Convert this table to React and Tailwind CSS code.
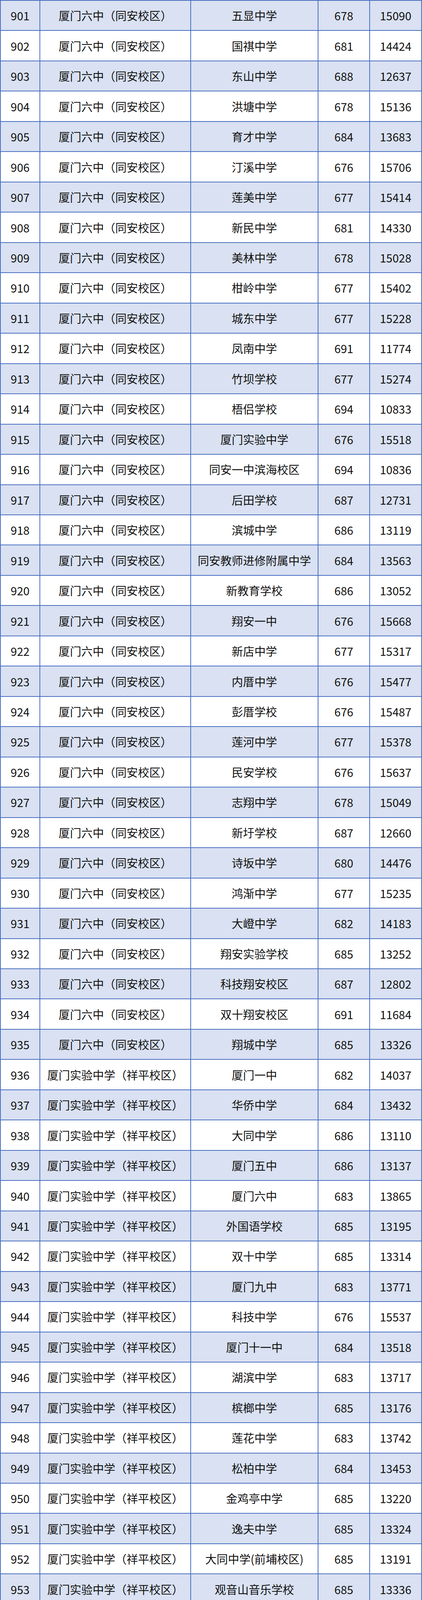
const A = '厦门六中（同安校区）';
const B = '厦门实验中学（祥平校区）';

const rows = [
  ['五显中学', 678, 15090], ['国祺中学', 681, 14424], ['东山中学', 688, 12637], ['洪塘中学', 678, 15136],
  ['育才中学', 684, 13683], ['汀溪中学', 676, 15706], ['莲美中学', 677, 15414], ['新民中学', 681, 14330],
  ['美林中学', 678, 15028], ['柑岭中学', 677, 15402], ['城东中学', 677, 15228], ['凤南中学', 691, 11774],
  ['竹坝学校', 677, 15274], ['梧侣学校', 694, 10833], ['厦门实验中学', 676, 15518], ['同安一中滨海校区', 694, 10836],
  ['后田学校', 687, 12731], ['滨城中学', 686, 13119], ['同安教师进修附属中学', 684, 13563], ['新教育学校', 686, 13052],
  ['翔安一中', 676, 15668], ['新店中学', 677, 15317], ['内厝中学', 676, 15477], ['彭厝学校', 676, 15487],
  ['莲河中学', 677, 15378], ['民安学校', 676, 15637], ['志翔中学', 678, 15049], ['新圩学校', 687, 12660],
  ['诗坂中学', 680, 14476], ['鸿渐中学', 677, 15235], ['大嶝中学', 682, 14183], ['翔安实验学校', 685, 13252],
  ['科技翔安校区', 687, 12802], ['双十翔安校区', 691, 11684], ['翔城中学', 685, 13326],
  ['厦门一中', 682, 14037], ['华侨中学', 684, 13432], ['大同中学', 686, 13110], ['厦门五中', 686, 13137],
  ['厦门六中', 683, 13865], ['外国语学校', 685, 13195], ['双十中学', 685, 13314], ['厦门九中', 683, 13771],
  ['科技中学', 676, 15537], ['厦门十一中', 684, 13518], ['湖滨中学', 683, 13717], ['槟榔中学', 685, 13176],
  ['莲花中学', 683, 13742], ['松柏中学', 684, 13453], ['金鸡亭中学', 685, 13220], ['逸夫中学', 685, 13324],
  ['大同中学(前埔校区)', 685, 13191], ['观音山音乐学校', 685, 13336], ['云顶学校', 684, 13514],
  ['双十中学思明分校', 684, 13674], ['外国语瑞景分校', 683, 13793], ['东浦中学', 681, 14206], ['厦门三中', 685, 13216],
  ['禾山中学', 684, 13476], ['湖里中学', 684, 13445], ['金尚中学', 684, 13519], ['蔡塘学校', 685, 13389],
  ['五缘实验学校', 685, 13306], ['外国语湖里分校', 686, 13131], ['湖里实验中学', 684, 13444],
  ['音乐学校(五通校区)', 685, 13196], ['五缘第二实验学校', 685, 13391], ['金林湾实验学校', 685, 13347],
  ['龙湫亭实验学校', 686, 13112], ['梧桐实验学校', 685, 13330], ['音乐学校专业班', 684, 13431], ['博林中学', 685, 13342],
  ['光华学校', 684, 13512], ['超强学校', 666, 18006], ['信成火炬学校', 685, 13383], ['同安一中', 682, 14125],
  ['同安实验中学', 677, 15365], ['第二外国语学校', 681, 14247], ['五显中学', 670, 17123], ['国祺中学', 671, 16790],
  ['东山中学', 679, 14800], ['洪塘中学', 669, 17485], ['育才中学', 673, 16497], ['汀溪中学', 665, 18343],
  ['莲美中学', 662, 18995], ['新民中学', 670, 17108], ['美林中学', 669, 17285], ['柑岭中学', 663, 18632],
  ['城东中学', 662, 18942], ['凤南中学', 671, 16865], ['竹坝学校', 664, 18609], ['梧侣学校', 682, 14073],
  ['厦门实验中学', 669, 17356], ['同安一中滨海校区', 683, 13823], ['后田学校', 677, 15446], ['滨城中学', 677, 15381],
  ['同安教师进修附属中学', 673, 16265], ['新教育学校', 672, 16701], ['厦门华兴学校', 670, 17188], ['翔安一中', 665, 18194],
];

const App = () => {
  return (
    <div className="h-[7750px] w-[1080px] overflow-hidden bg-white font-['Noto_Sans_CJK_SC','Noto_Sans',sans-serif] text-[29px] leading-none text-[#111]">
      <div className="border-l-2 border-r-2 border-t-2 border-[#4a70c2]">
        {rows.map(([school, score, rank], i) => {
          const no = 901 + i;
          return (
            <div
              key={no}
              className={`grid h-[77.48px] grid-cols-[101px_386px_326px_132px_1fr] border-b-2 border-[#4a70c2] ${i % 2 === 0 ? 'bg-[#d9e1f2]' : 'bg-white'}`}
            >
              <div className="flex items-center justify-center border-r-2 border-[#4a70c2]">{no}</div>
              <div className="flex items-center justify-center border-r-2 border-[#4a70c2]">{no <= 935 ? A : B}</div>
              <div className="flex items-center justify-center whitespace-nowrap border-r-2 border-[#4a70c2]">{school}</div>
              <div className="flex items-center justify-center border-r-2 border-[#4a70c2]">{score}</div>
              <div className="flex items-center justify-center">{rank}</div>
            </div>
          );
        })}
      </div>
    </div>
  );
};

export default App;
